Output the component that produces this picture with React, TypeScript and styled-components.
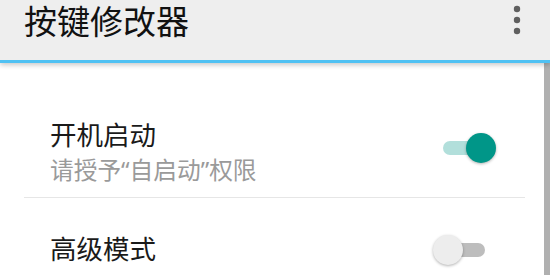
import React, { useState } from 'react'
import styled, { createGlobalStyle } from 'styled-components'

const GlobalStyle = createGlobalStyle`
  html, body {
    margin: 0;
    padding: 0;
    background: #ffffff;
    overflow: hidden;
  }
  body {
    font-family: "Noto Sans CJK SC", "Noto Sans", sans-serif;
  }
`

const Screen = styled.div`
  width: 550px;
  height: 275px;
  display: flex;
  flex-direction: column;
  overflow: hidden;
  background: #ffffff;
`

const ActionBar = styled.header`
  position: relative;
  z-index: 2;
  box-sizing: border-box;
  height: 63px;
  flex: 0 0 63px;
  display: flex;
  align-items: center;
  justify-content: space-between;
  padding: 4px 28px 20px 24px;
  background: #eeeeee;
  border-bottom: 3px solid #4fc1f3;
  box-shadow: 0 2px 5px rgba(0, 0, 0, 0.22);
`

const Title = styled.h1`
  margin: -4px 0 0;
  font-size: 33px;
  line-height: 40px;
  font-weight: 400;
  color: #111111;
`

const MenuButton = styled.div`
  width: 10px;
  height: 36px;
  margin-top: -4px;
  display: flex;
  align-items: center;
  justify-content: center;
`

const Body = styled.div`
  flex: 1;
  display: flex;
  min-height: 0;
`

const List = styled.div`
  flex: 1;
  padding: 24px 19px 0 24px;
`

const Scrollbar = styled.div`
  width: 6px;
  flex: 0 0 6px;
  background: #b0b0b0;
`

const Row = styled.div<{ $divider?: boolean }>`
  display: flex;
  align-items: center;
  justify-content: space-between;
  padding: 32px 28px 13px 26px;
  border-bottom: ${(p) => (p.$divider ? '1px solid #e6e6e6' : 'none')};
`

const Texts = styled.div`
  display: flex;
  flex-direction: column;
  gap: 7px;
`

const RowTitle = styled.div`
  font-size: 26.5px;
  line-height: 30px;
  color: #1a1a1a;
`

const RowSummary = styled.div`
  font-family: "Noto Sans", "Noto Sans CJK SC", sans-serif;
  font-size: 23.7px;
  line-height: 28px;
  color: #9a9a9a;
`

const SwitchBox = styled.button<{ $on: boolean }>`
  position: relative;
  width: 64px;
  height: 32px;
  padding: 0;
  border: none;
  background: transparent;
  cursor: pointer;
  margin-top: ${(p) => (p.$on ? '-7px' : '4px')};
`

const Track = styled.span<{ $on: boolean }>`
  position: absolute;
  left: 10px;
  right: 12px;
  top: 9px;
  height: 14px;
  border-radius: 7px;
  background: ${(p) => (p.$on ? '#b2dfdb' : '#bdbdbd')};
`

const Thumb = styled.span<{ $on: boolean }>`
  position: absolute;
  top: 1px;
  left: ${(p) => (p.$on ? '33px' : '0px')};
  width: 30px;
  height: 30px;
  border-radius: 50%;
  background: ${(p) => (p.$on ? '#009688' : '#ededed')};
  box-shadow: 0 1px 3px rgba(0, 0, 0, 0.3);
`

function Switch({ on, onToggle }: { on: boolean; onToggle: () => void }) {
  return (
    <SwitchBox $on={on} onClick={onToggle} aria-pressed={on}>
      <Track $on={on} />
      <Thumb $on={on} />
    </SwitchBox>
  )
}

function OverflowIcon() {
  return (
    <svg width="8" height="30" viewBox="0 0 8 30">
      <circle cx="4" cy="4" r="3.2" fill="#5f5f5f" />
      <circle cx="4" cy="15" r="3.2" fill="#5f5f5f" />
      <circle cx="4" cy="26" r="3.2" fill="#5f5f5f" />
    </svg>
  )
}

export default function App() {
  const [autoStart, setAutoStart] = useState(true)
  const [advanced, setAdvanced] = useState(false)

  return (
    <>
      <GlobalStyle />
      <Screen>
        <ActionBar>
          <Title>按键修改器</Title>
          <MenuButton>
            <OverflowIcon />
          </MenuButton>
        </ActionBar>
        <Body>
          <List>
            <Row $divider>
              <Texts>
                <RowTitle>开机启动</RowTitle>
                <RowSummary>请授予“自启动”权限</RowSummary>
              </Texts>
              <Switch on={autoStart} onToggle={() => setAutoStart(!autoStart)} />
            </Row>
            <Row>
              <Texts>
                <RowTitle>高级模式</RowTitle>
              </Texts>
              <Switch on={advanced} onToggle={() => setAdvanced(!advanced)} />
            </Row>
          </List>
          <Scrollbar />
        </Body>
      </Screen>
    </>
  )
}
